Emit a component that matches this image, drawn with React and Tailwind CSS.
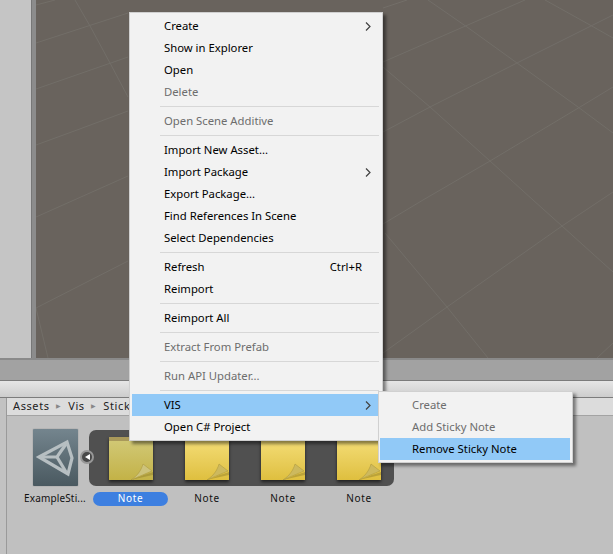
import { Fragment } from "react";

const mainMenu = [
  [
    { label: "Create", arrow: true },
    { label: "Show in Explorer" },
    { label: "Open" },
    { label: "Delete", off: true },
  ],
  [{ label: "Open Scene Additive", off: true }],
  [
    { label: "Import New Asset..." },
    { label: "Import Package", arrow: true },
    { label: "Export Package..." },
    { label: "Find References In Scene" },
    { label: "Select Dependencies" },
  ],
  [{ label: "Refresh", shortcut: "Ctrl+R" }, { label: "Reimport" }],
  [{ label: "Reimport All" }],
  [{ label: "Extract From Prefab", off: true }],
  [{ label: "Run API Updater...", off: true }],
  [{ label: "VIS", arrow: true, active: true }, { label: "Open C# Project" }],
];

const subMenu = [
  { label: "Create", off: true },
  { label: "Add Sticky Note", off: true },
  { label: "Remove Sticky Note", active: true },
];

const gridLines = [
  "M36 5 L55 0",
  "M36 43 L128 13",
  "M36 89 L128 57",
  "M36 145 L77 130 L128 111",
  "M36 217 L128 176",
  "M36 308 L128 261",
  "M383 8 L407 0",
  "M383 62 L525 0",
  "M383 132 L430 107 L517 63 L613 15",
  "M383 224 L423 200 L490 161 L580 107 L613 87",
  "M383 353 L447 307 L562 226 L613 192",
  "M597 358 L613 343",
  "M75 0 L90 26 L110 63 L128 97",
  "M36 308 L48 358",
  "M428 0 L467 27 L517 63 L578 107 L613 133",
  "M383 67 L430 107 L490 161 L533 200 L562 226 L613 272",
  "M385 233 L447 307 L488 358",
  "M545 0 L590 25 L613 38",
];

function Chevron() {
  return (
    <svg width="6" height="9" viewBox="0 0 6 9" className="shrink-0">
      <path d="M1 0.5 L5 4.5 L1 8.5" fill="none" stroke="#404040" strokeWidth="1.2" />
    </svg>
  );
}

function MenuRow({ item }) {
  return (
    <div
      className={`flex h-[22px] items-center pl-[32px] pr-[9px] ${item.active ? "bg-[#91c9f7]" : ""} ${
        item.off ? "text-[#6d6d6d]" : "text-black"
      }`}
    >
      <span className="flex-1">{item.label}</span>
      {item.shortcut && <span className="mr-[9px]">{item.shortcut}</span>}
      {item.arrow && <Chevron />}
    </div>
  );
}

function SceneGrid() {
  return (
    <svg className="absolute inset-0 h-full w-full" viewBox="36 0 577 358">
      <g stroke="#726e68" strokeWidth="1" fill="none">
        {gridLines.map((d) => (
          <path key={d} d={d} />
        ))}
      </g>
    </svg>
  );
}

function UnityCube() {
  return (
    <div className="flex h-[57px] w-[45px] items-center justify-center rounded-[1px] bg-gradient-to-b from-[#74858e] to-[#4a5960] shadow-[0_0_1px_#555]">
      <svg width="45" height="57" viewBox="0 0 45 57">
        <g fill="none" stroke="#b7bfc2" strokeWidth="3.2" strokeLinejoin="miter">
          <path d="M6 28 L34 13 L39 29 L35 45 Z" />
          <path d="M6 28 L24 28 L33 15" />
          <path d="M24 28 L33 43" />
        </g>
      </svg>
    </div>
  );
}

function Note({ dim }) {
  return (
    <div
      className={`relative h-[43px] w-[44px] shadow-[0_2px_3px_rgba(0,0,0,0.6)] ${
        dim ? "bg-gradient-to-b from-[#d2ca78] to-[#c3b246]" : "bg-gradient-to-b from-[#f5df78] to-[#dfbf3e]"
      }`}
    >
      {dim && <div className="h-[4px] bg-[#a9995a]" />}
      <svg width="22" height="17" viewBox="0 0 22 17" className="absolute bottom-0 right-0">
        <path d="M0 17 C6 15 12 12 16 11 C18 10 20 10 22 9 L22 12 C16 13 8 15 0 17 Z" fill="#8f7d2a" opacity="0.45" />
        <path d="M0 17 C6 13 10 8 12 1 L21 8 C16 10 7 14 0 17 Z" fill={dim ? "#cdc37c" : "#cdb95e"} stroke="#a8953a" strokeWidth="0.5" />
      </svg>
    </div>
  );
}

export default function App() {
  return (
    <div className="relative flex h-[554px] w-[613px] flex-col overflow-hidden bg-[#c2c2c2] font-['Noto_Sans',sans-serif] text-[11.3px]">
      <div className="flex h-[358px]">
        <div className="w-[31px] bg-[#c5c5c5]" />
        <div className="w-px bg-[#777]" />
        <div className="w-[4px] bg-[#8c8c8c]" />
        <div className="relative flex-1 bg-[#69635d]">
          <SceneGrid />
        </div>
      </div>
      <div className="h-[22px] bg-[#a2a2a2] shadow-[inset_0_2px_0_#8a8a8a]" />
      <div className="h-[18px] border-y border-[#7c7c7c] bg-gradient-to-b from-[#e6e6e6] to-[#cdcdcd]" />
      <div className="flex flex-1">
        <div className="w-[7px] border-r border-[#9a9a9a] bg-[#c2c2c2]" />
        <div className="flex flex-1 flex-col">
          <div className="flex h-[18px] items-center gap-[6.5px] border-b border-[#a3a3a3] bg-[#dcdcdc] pl-[6px] text-[11px] tracking-[0.6px] text-[#222]">
            <span>Assets</span>
            <span className="text-[6px] text-[#888]">▶</span>
            <span>Vis</span>
            <span className="text-[6px] text-[#888]">▶</span>
            <span>Sticky</span>
          </div>
          <div className="relative flex-1 bg-[#c0c0c0] pl-[26px] pt-[13px]">
            <div className="flex items-start">
              <UnityCube />
              <div className="ml-[11px] mt-px flex h-[56px] items-start gap-[32px] rounded-[7px] bg-[#505050] pl-[20px] pr-[13px] pt-[7px]">
                <Note dim />
                <Note />
                <Note />
                <Note />
              </div>
            </div>
            <div className="mt-[5px] flex items-center text-[10px] tracking-[0.7px] text-[#111]">
              <span className="-ml-[9px] w-[63px] whitespace-nowrap tracking-[0.15px]">ExampleSti...</span>
              <span className="ml-[6px] flex h-[14px] w-[75px] items-center justify-center rounded-full bg-[#3d7fe0] text-white">Note</span>
              <span className="ml-[1px] w-[76px] text-center">Note</span>
              <span className="w-[76px] text-center">Note</span>
              <span className="w-[76px] text-center">Note</span>
            </div>
            <div className="absolute left-[73px] top-[34px] flex h-[14px] w-[14px] items-center justify-center rounded-full border-2 border-[#979797] bg-[#484848]">
              <span className="h-0 w-0 border-y-[3px] border-r-[5px] border-y-transparent border-r-white" />
            </div>
          </div>
        </div>
      </div>

      <div className="absolute left-[129px] top-[12px] w-[254px] border border-[#d0d0d0] bg-[#f2f2f2] p-[2px] shadow-[3px_3px_3px_rgba(0,0,0,0.45)]">
        {mainMenu.map((group, i) => (
          <Fragment key={i}>
            {i > 0 && <div className="my-[3px] ml-[28px] mr-[1px] h-px bg-[#d7d7d7]" />}
            {group.map((item) => (
              <MenuRow key={item.label} item={item} />
            ))}
          </Fragment>
        ))}
      </div>

      <div className="absolute left-[378px] top-[391px] w-[195px] border border-[#d0d0d0] bg-[#f2f2f2] py-[2px] pl-px pr-[2px] shadow-[3px_3px_3px_rgba(0,0,0,0.45)]">
        {subMenu.map((item) => (
          <MenuRow key={item.label} item={item} />
        ))}
      </div>
    </div>
  );
}
